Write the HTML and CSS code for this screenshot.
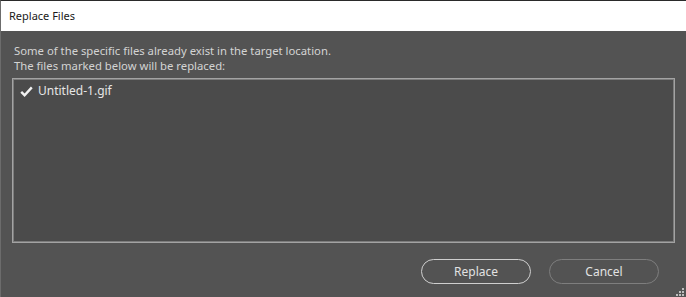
FILE: index.html
```html
<!DOCTYPE html>
<html lang="en">

<head>
    <meta charset="UTF-8">
    <title>Replace Files</title>
    <link rel="stylesheet" href="styles.css">
</head>

<body>
    <div class="dialog">
        <div class="titlebar">Replace Files</div>

        <div class="content">
            <p class="message">Some of the specific files already exist in the target location.<br>
                The files marked below will be replaced:</p>

            <div class="file-list">
                <div class="file-item">
                    <svg class="check" width="13" height="11" viewBox="0 0 13 11">
                        <path d="M1.2 5.8 L4.6 9.2 L11.8 1.4" fill="none" stroke="#f2f2f2" stroke-width="2.4" />
                    </svg>
                    <span>Untitled-1.gif</span>
                </div>
            </div>

            <div class="actions">
                <button class="btn primary">Replace</button>
                <button class="btn">Cancel</button>
            </div>
        </div>

        <div class="grip">
            <svg width="9" height="9" viewBox="0 0 9 9">
                <rect x="6" y="0" width="2" height="2" fill="#bdbdbd" />
                <rect x="3" y="3" width="2" height="2" fill="#bdbdbd" />
                <rect x="6" y="3" width="2" height="2" fill="#bdbdbd" />
                <rect x="0" y="6" width="2" height="2" fill="#bdbdbd" />
                <rect x="3" y="6" width="2" height="2" fill="#bdbdbd" />
                <rect x="6" y="6" width="2" height="2" fill="#bdbdbd" />
            </svg>
        </div>
    </div>
</body>

</html>
```

FILE: styles.css
```css
html,
body {
    margin: 0;
    padding: 0;
    height: 100%;
}

body {
    font-family: 'Noto Sans', 'Open Sans', sans-serif;
    background-color: #535353;
}

.dialog {
    position: relative;
    box-sizing: border-box;
    height: 297px;
    border-top: 1px solid #2a2a2a;
    border-left: 1px solid #6c6c6c;
    background-color: #535353;
    display: flex;
    flex-direction: column;
}

.titlebar {
    height: 30px;
    background-color: #fff;
    color: #1a1a1a;
    font-size: 11px;
    line-height: 30px;
    padding-left: 8px;
}

.content {
    flex: 1;
    padding: 12px 11px 0 11px;
    display: flex;
    flex-direction: column;
}

.message {
    margin: 0 0 0 2px;
    color: #d4d4d4;
    font-size: 11.3px;
    line-height: 15px;
}

.file-list {
    height: 165px;
    margin-top: 5px;
    border: 1px solid #a3a3a3;
    box-shadow: inset 0 0 0 1px #7c7c7c;
    background-color: #4b4b4b;
    box-sizing: border-box;
    padding: 3px 6px;
}

.file-item {
    display: flex;
    align-items: center;
    gap: 5px;
    color: #e6e6e6;
    font-size: 12px;
    line-height: 18px;
}

.check {
    margin-left: 1px;
}

.actions {
    display: flex;
    justify-content: flex-end;
    gap: 18px;
    margin-top: 16px;
    padding-right: 16px;
}

.btn {
    width: 110px;
    height: 25px;
    border-radius: 13px;
    border: 1px solid #7e7e7e;
    background-color: transparent;
    color: #e2e2e2;
    font-family: 'Noto Sans', 'Open Sans', sans-serif;
    font-size: 12px;
    padding: 0;
    cursor: pointer;
}

.btn.primary {
    border-color: #cfcfcf;
}

.grip {
    position: absolute;
    right: 1px;
    bottom: 0;
    line-height: 0;
}
```
